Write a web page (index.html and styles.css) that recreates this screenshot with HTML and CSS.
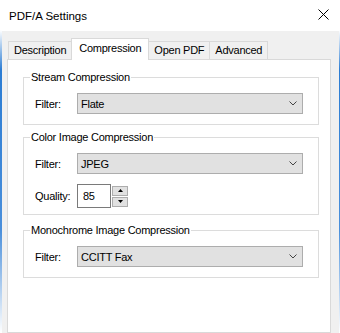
FILE: index.html
```html
<!DOCTYPE html>
<html lang="en">
<head>
  <meta charset="UTF-8">
  <title>PDF/A Settings</title>
  <link rel="stylesheet" href="styles.css">
</head>
<body>
  <div class="window">
    <div class="titlebar">
      <span class="title">PDF/A Settings</span>
      <svg class="close" width="11" height="11" viewBox="0 0 11 11">
        <path d="M0.5 0.5 L10.5 10.5 M10.5 0.5 L0.5 10.5" stroke="#000" stroke-width="1" fill="none"/>
      </svg>
    </div>
    <div class="content">
      <div class="tabs">
        <div class="tab">Description</div>
        <div class="tab active">Compression</div>
        <div class="tab">Open PDF</div>
        <div class="tab">Advanced</div>
      </div>
      <div class="panel">
        <fieldset class="group">
          <legend>Stream Compression</legend>
          <div class="row">
            <label>Filter:</label>
            <div class="select">Flate
              <svg class="chevron" width="8" height="5" viewBox="0 0 8 5"><path d="M0.5 0.5 L4 4 L7.5 0.5" stroke="#444" fill="none"/></svg>
            </div>
          </div>
        </fieldset>
        <fieldset class="group group-color">
          <legend>Color Image Compression</legend>
          <div class="row">
            <label>Filter:</label>
            <div class="select">JPEG
              <svg class="chevron" width="8" height="5" viewBox="0 0 8 5"><path d="M0.5 0.5 L4 4 L7.5 0.5" stroke="#444" fill="none"/></svg>
            </div>
          </div>
          <div class="row quality">
            <label>Quality:</label>
            <div class="number">85</div>
            <div class="spin">
              <div class="spin-btn"><svg width="5" height="3" viewBox="0 0 5 3"><path d="M2.5 0 L5 3 L0 3 Z" fill="#000"/></svg></div>
              <div class="spin-btn"><svg width="5" height="3" viewBox="0 0 5 3"><path d="M0 0 L5 0 L2.5 3 Z" fill="#000"/></svg></div>
            </div>
          </div>
        </fieldset>
        <fieldset class="group">
          <legend>Monochrome Image Compression</legend>
          <div class="row">
            <label>Filter:</label>
            <div class="select">CCITT Fax
              <svg class="chevron" width="8" height="5" viewBox="0 0 8 5"><path d="M0.5 0.5 L4 4 L7.5 0.5" stroke="#444" fill="none"/></svg>
            </div>
          </div>
        </fieldset>
      </div>
    </div>
  </div>
</body>
</html>
```

FILE: styles.css
```css
* {
  box-sizing: border-box;
}

body {
  margin: 0;
  width: 340px;
  height: 333px;
  overflow: hidden;
  font-family: "Liberation Sans", Arial, sans-serif;
  font-size: 11px;
  letter-spacing: -0.25px;
  color: #000;
  background: linear-gradient(to bottom, #ffffff 0, #ffffff 30px, #2b7cd3 70px, #4a8fdb 230px, #ffffff 333px);
}

.window {
  margin: 0 1px 0 2px;
  height: 333px;
  display: flex;
  flex-direction: column;
  background: #f0f0f0;
}

.titlebar {
  height: 31px;
  flex-shrink: 0;
  display: flex;
  align-items: center;
  justify-content: space-between;
  padding: 0 10px 0 7px;
  background: #fff;
}

.title {
  font-size: 11.5px;
  letter-spacing: 0;
}

.close {
  margin-top: -2px;
}

.content {
  flex: 1;
  display: flex;
  flex-direction: column;
  padding: 7px 8px 0 5px;
}

.tabs {
  display: flex;
  align-items: flex-start;
  padding-left: 1px;
  height: 21px;
}

.tab {
  height: 18px;
  margin-top: 3px;
  padding: 0 5px;
  line-height: 17px;
  background: #f0f0f0;
  border: 1px solid #d9d9d9;
  border-bottom: none;
  white-space: nowrap;
}

.tab + .tab {
  margin-left: -1px;
}

.tab.active {
  position: relative;
  z-index: 1;
  height: 22px;
  margin-top: 0;
  padding: 0 7px;
  line-height: 18px;
  background: #fff;
}

.panel {
  flex: 1;
  background: #fff;
  border: 1px solid #d9d9d9;
  padding: 10px 11px 0 15px;
}

.group {
  margin: 0 0 5px;
  padding: 8px 0 10px 0;
  border: 1px solid #dcdcdc;
  min-width: 0;
}

.group-color {
  margin-bottom: 8px;
  padding-bottom: 6px;
}

.group legend {
  margin-left: 6px;
  padding: 0 1px;
  line-height: 15px;
}

.row {
  display: flex;
  align-items: center;
  padding-left: 11px;
}

.row label {
  width: 42px;
  flex-shrink: 0;
}

.select {
  width: 226px;
  height: 21px;
  padding: 0 5px 0 3px;
  display: flex;
  align-items: center;
  justify-content: space-between;
  background: #e1e1e1;
  border: 1px solid #adadad;
}

.quality {
  margin-top: 10px;
}

.number {
  width: 34px;
  height: 24px;
  padding-left: 5px;
  line-height: 22px;
  border: 1px solid #7a7a7a;
}

.spin {
  margin-left: 1px;
  display: flex;
  flex-direction: column;
  gap: 1px;
}

.spin-btn {
  width: 16px;
  height: 10px;
  display: flex;
  align-items: center;
  justify-content: center;
  background: #e1e1e1;
  border: 1px solid #adadad;
}
```
